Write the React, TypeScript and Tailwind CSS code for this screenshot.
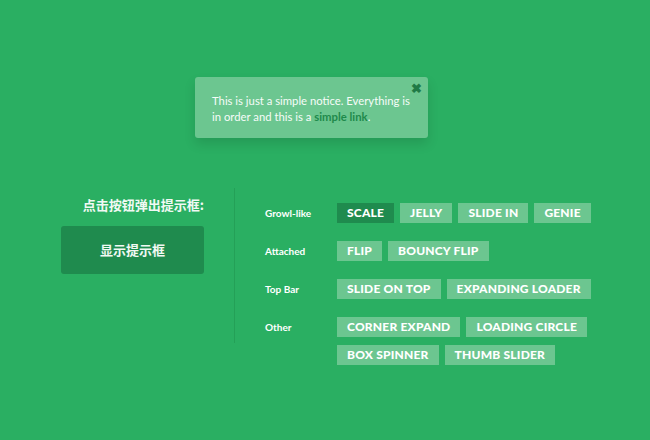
import React from "react";

const groups: { label: string; rows: string[][] }[] = [
  { label: "Growl-like", rows: [["SCALE", "JELLY", "SLIDE IN", "GENIE"]] },
  { label: "Attached", rows: [["FLIP", "BOUNCY FLIP"]] },
  { label: "Top Bar", rows: [["SLIDE ON TOP", "EXPANDING LOADER"]] },
  {
    label: "Other",
    rows: [
      ["CORNER EXPAND", "LOADING CIRCLE"],
      ["BOX SPINNER", "THUMB SLIDER"],
    ],
  },
];

export default function App() {
  return (
    <div className="w-[650px] h-[440px] bg-[#2aaf62] overflow-hidden font-['Lato',sans-serif] text-white">
      {/* notice */}
      <div className="pt-[77px] pl-[195px]">
        <div className="relative w-[233px] h-[61px] rounded-[3px] bg-[#6cc690] pt-[16px] pl-[17px] text-[11.3px] leading-[16px] text-[#f6fcf8] shadow-[0_6px_12px_rgba(0,0,0,0.12)]">
          This is just a simple notice. Everything is
          <br />
          in order and this is a{" "}
          <a className="font-bold text-[#1f8a4c]">simple link</a>.
          <span className="absolute top-[3px] right-[6px] text-[13px] font-bold text-[#1f7a46]">
            ✖
          </span>
        </div>
      </div>

      {/* main */}
      <div className="flex mt-[50px]">
        <div className="ml-[61px] w-[143px] flex flex-col items-end">
          <div className="mt-[9px] h-[16px] leading-[16px] text-[13px] font-bold font-['Noto_Sans_CJK_SC',serif] text-[#f1f9f4]">
            点击按钮弹出提示框:
          </div>
          <button className="mt-[13px] w-[143px] h-[48px] rounded-[3px] bg-[#1f8b4e] text-[13px] font-bold font-['Noto_Sans_CJK_SC',sans-serif] text-[#f1f9f4]">
            显示提示框
          </button>
        </div>

        <div className="ml-[30px] w-px h-[155px] bg-[#24a057]" />

        <div className="ml-[30px] pt-[15px] flex flex-col gap-[18px]">
          {groups.map((g) => (
            <div key={g.label} className="flex items-start">
              <div className="w-[72px] h-[20px] leading-[20px] text-[10px] font-bold">
                {g.label}
              </div>
              <div className="flex flex-col gap-[8px]">
                {g.rows.map((row, i) => (
                  <div key={i} className="flex gap-[6px]">
                    {row.map((t) => (
                      <span
                        key={t}
                        className={
                          t === "SCALE"
                            ? "h-[20px] px-[10px] leading-[20px] text-[12px] font-black tracking-[0.2px] bg-[#1f8b4e]"
                            : "h-[20px] px-[10px] leading-[20px] text-[12px] font-black tracking-[0.2px] bg-[#6cc690]"
                        }
                      >
                        {t}
                      </span>
                    ))}
                  </div>
                ))}
              </div>
            </div>
          ))}
        </div>
      </div>
    </div>
  );
}
